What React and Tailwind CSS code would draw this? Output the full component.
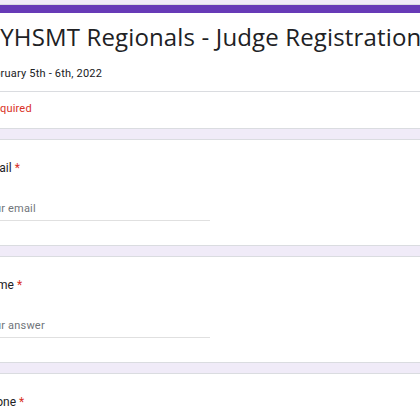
import React from 'react';

const Question = ({ label, placeholder }) => (
  <div className="bg-white border border-[#dadce0] rounded-lg h-[107px] px-[18px] pt-[19px]">
    <div className="text-[12px] leading-[18px] text-[#202124]">
      {label} <span className="text-[#d93025]">*</span>
    </div>
    <div className="mt-[24px] w-[228px] border-b border-[#e0e0e0] pb-[3px] text-[11px] leading-[16px] text-[#70757a] tracking-[0.2px]">
      {placeholder}
    </div>
  </div>
);

export default function App() {
  return (
    <div className="min-h-screen bg-[#f0ebf8] pt-[4px] overflow-hidden font-['Roboto',sans-serif]">
      <div className="-ml-[37px] w-[490px] flex flex-col gap-[10px]">
        {/* Header card */}
        <div className="bg-white border border-[#dadce0] rounded-lg overflow-hidden">
          <div className="h-[9px] bg-[#673ab7] -mt-px" />
          <div className="px-[18px] pt-[10px] pb-[9px]">
            <h1 className="font-['Open_Sans',sans-serif] text-[24px] leading-[28px] tracking-[0.15px] text-[#202124] whitespace-nowrap">
              NYHSMT Regionals - Judge Registration
            </h1>
            <div className="mt-[15px] text-[11px] leading-[16px] text-[#202124] tracking-[0.2px]">
              February 5th - 6th, 2022
            </div>
          </div>
          <div className="border-t border-[#dadce0] px-[18px] pt-[9px] pb-[11px] text-[11px] leading-[16px] text-[#d93025] tracking-[0.2px]">
            *Required
          </div>
        </div>

        <Question label="Email" placeholder="Your email" />
        <Question label="Name" placeholder="Your answer" />
        <Question label="Phone" placeholder="Your answer" />
      </div>
    </div>
  );
}
